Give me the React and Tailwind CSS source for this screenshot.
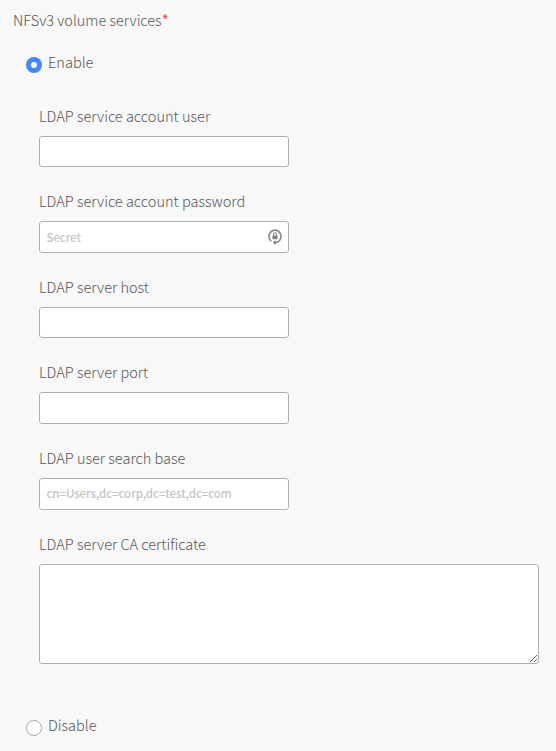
const fields = [
  { label: 'LDAP service account user', size: 'h-[31px]' },
  { label: 'LDAP service account password', placeholder: 'Secret', secret: true, size: 'h-8' },
  { label: 'LDAP server host', size: 'h-[31px]' },
  { label: 'LDAP server port', size: 'h-8' },
  { label: 'LDAP user search base', placeholder: 'cn=Users,dc=corp,dc=test,dc=com', size: 'h-8 pb-[3px]' },
];

function KeyLockIcon() {
  return (
    <svg className="h-4 w-4 shrink-0" viewBox="0 0 16 16" fill="none">
      <path d="M4.2 12.1A6 6.2 0 1 1 11.8 12.1Q10.6 13.3 9 13.5" stroke="#8c8c8c" strokeWidth="1.7" />
      <path d="M8.8 11.2v4.8L5.8 13.6z" fill="#777" />
      <path d="M6.5 7V5.4a1.5 1.5 0 0 1 3 0V7" stroke="#8c8c8c" strokeWidth="1.1" />
      <rect x="5.5" y="6.5" width="5" height="3.8" rx=".4" fill="#808080" />
    </svg>
  );
}

function Radio({ label, checked }) {
  return (
    <label className="ml-[13px] flex h-6 items-center">
      <span
        className={
          checked
            ? 'mt-1.5 flex h-4 w-4 items-center justify-center rounded-full bg-[#4289f7]'
            : 'mt-1.5 h-4 w-4 rounded-full border border-[#aaa] bg-white'
        }
      >
        {checked && <span className="h-1.5 w-1.5 rounded-full bg-white" />}
      </span>
      <span className="ml-1.5">{label}</span>
    </label>
  );
}

export default function App() {
  return (
    <div className="h-[751px] w-[556px] overflow-hidden bg-[#f8f8f8] pl-[13px] pt-2 font-['Noto_Sans_CJK_SC',sans-serif] text-[14.55px] font-light leading-6 text-[#565656]">
      <div className="h-6 tracking-[-0.02px]">
        NFSv3 volume services<span className="font-medium text-[#ff5a52]">*</span>
      </div>
      <div className="mt-[18px]">
        <Radio label="Enable" checked />
      </div>
      <div className="ml-[26px] mt-[30px]">
        {fields.map((f) => (
          <div key={f.label} className="mb-[22px]">
            <div className="h-6">{f.label}</div>
            <div className={`mt-2 flex w-[250px] items-center rounded-[3px] border border-[#b0b0b0] bg-white pl-[6.5px] pr-[5px] ${f.size}`}>
              <input
                className="min-w-0 flex-1 bg-transparent text-[11.5px] font-medium tracking-[-0.1px] outline-none placeholder:text-[#c4c4c4]"
                placeholder={f.placeholder}
              />
              {f.secret && <KeyLockIcon />}
            </div>
          </div>
        ))}
        <div className="h-6">LDAP server CA certificate</div>
        <textarea className="mt-2 block h-[100px] w-[500px] resize rounded-[3px] border border-[#b0b0b0] bg-white outline-none" />
      </div>
      <div className="mt-[49px]">
        <Radio label="Disable" />
      </div>
    </div>
  );
}
